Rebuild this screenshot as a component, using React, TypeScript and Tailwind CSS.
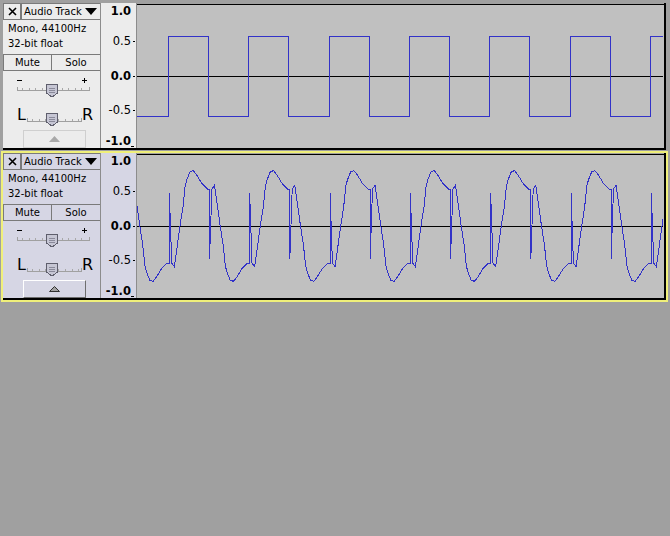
import React from "react";

const P = 80.33;

function squarePath(): string {
  let d = "M136 116.5";
  for (let k = 0; k < 7; k++) {
    const off = Math.round(P * k);
    const xr = 168 + off + 0.5;
    const xf = 208 + off + 0.5;
    d += ` H${xr} V36.5 H${xf} V116.5`;
  }
  return d;
}

const half: [number, number][] = [
  [0, 37], [0, -33], [1, -5], [2.4, 37], [5, 40.7], [7.4, 24], [10.7, 0],
  [13.7, -19.3], [15.7, -39.3], [17.4, -46], [20.7, -54.3], [24, -55.3],
  [27.4, -51], [32.4, -42.7], [38, -37],
];

function complexPoints(): string {
  const pts: string[] = [];
  for (let k = -1; k < 7; k++) {
    const base = 169.3 + k * P;
    for (const [t, dy] of half) pts.push(`${(base + t).toFixed(1)},${(226 + dy).toFixed(1)}`);
    const base2 = base + P / 2;
    for (const [t, dy] of half) pts.push(`${(base2 + t).toFixed(1)},${(226 - dy).toFixed(1)}`);
  }
  return pts.join(" ");
}

function Ruler({ y0 }: { y0: number }) {
  const labels: { t: string; y: number; b: boolean; tick: boolean }[] = [
    { t: "1.0", y: 15, b: true, tick: false },
    { t: "0.5", y: 45, b: false, tick: true },
    { t: "0.0", y: 80, b: true, tick: true },
    { t: "-0.5", y: 114, b: false, tick: true },
    { t: "-1.0", y: 145, b: true, tick: false },
  ];
  return (
    <svg width={35} height={142} viewBox={`101 ${y0} 35 142`} className="block" shapeRendering="crispEdges">
      {labels.map((l) => (
        <g key={l.t}>
          <text
            x={131}
            y={l.y + (y0 - 5)}
            textAnchor="end"
            fontFamily="DejaVu Sans, sans-serif"
            fontSize={11.5}
            fontWeight={l.b ? 700 : 400}
            fill="#000"
          >
            {l.t}
          </text>
          {l.tick && <line x1={133} x2={135} y1={l.y - 3.5 + (y0 - 5)} y2={l.y - 3.5 + (y0 - 5)} stroke="#000" />}
        </g>
      ))}
      <line x1={131} x2={134} y1={y0 + 141.5} y2={y0 + 141.5} stroke="#000" />
    </svg>
  );
}

function ThumbShape({ x, y }: { x: number; y: number }) {
  return (
    <g transform={`translate(${x} ${y})`}>
      <path d="M0.5 0.5 H11.5 V9 L6 13 L0.5 9 Z" fill="#c6c6d4" stroke="#5e5e6c" />
      <line x1={3} x2={9} y1={4.5} y2={4.5} stroke="#8a8a9a" />
      <line x1={3} x2={9} y1={6.5} y2={6.5} stroke="#8a8a9a" />
      <line x1={3} x2={9} y1={8.5} y2={8.5} stroke="#8a8a9a" />
    </g>
  );
}

function Ticks({ x0, x1, y }: { x0: number; x1: number; y: number }) {
  const ticks: number[] = [];
  for (let x = x0 + 5; x < x1 - 2; x += 6.6) ticks.push(Math.round(x));
  return (
    <g>
      <line x1={x0} x2={x1} y1={y + 0.5} y2={y + 0.5} stroke="#a0a0a0" />
      {ticks.map((x) => (
        <line key={x} x1={x + 0.5} x2={x + 0.5} y1={y - 2} y2={y} stroke="#a8a8a8" />
      ))}
      <line x1={x0 + 0.5} x2={x0 + 0.5} y1={y - 3} y2={y} stroke="#a0a0a0" />
      <line x1={x1 - 0.5} x2={x1 - 0.5} y1={y - 3} y2={y} stroke="#a0a0a0" />
    </g>
  );
}

function GainSlider() {
  return (
    <svg width={76} height={21} viewBox="0 0 76 21" className="block ml-[13px]" shapeRendering="crispEdges">
      <line x1={1} x2={6} y1={3.5} y2={3.5} stroke="#000" />
      <line x1={66} x2={71} y1={3.5} y2={3.5} stroke="#000" />
      <line x1={68.5} x2={68.5} y1={1} y2={6} stroke="#000" />
      <Ticks x0={1} x1={74} y={13} />
      <ThumbShape x={30} y={7} />
    </svg>
  );
}

function PanSlider() {
  return (
    <div className="flex items-start h-[21px] ml-[14px] font-['DejaVu_Sans',sans-serif] text-[16px] leading-none">
      <span className="w-[10px]">L</span>
      <svg width={55} height={21} viewBox="0 0 55 21" className="block" shapeRendering="crispEdges">
        <Ticks x0={0} x1={55} y={14} />
        <ThumbShape x={19} y={6} />
      </svg>
      <span>R</span>
    </div>
  );
}

function Panel({ selected }: { selected: boolean }) {
  const bg = selected ? "bg-[#d6d6e4]" : "bg-[#ececec]";
  return (
    <div className={`w-[98px] h-full ${bg} border-r border-[#8c8c8c] flex flex-col font-['DejaVu_Sans',sans-serif] text-[10px] leading-none text-black`}>
      <div className="flex h-[17px]">
        <div className="w-[18px] h-[17px] border border-[#7a7a7a] flex items-center justify-center">
          <svg width={9} height={9} viewBox="0 0 9 9">
            <path d="M1 1 L8 8 M8 1 L1 8" stroke="#000" strokeWidth={1.6} />
          </svg>
        </div>
        <div className="flex-1 h-[17px] border-y border-l border-[#7a7a7a] flex items-center pl-[2px] pr-[2px]">
          <span className="flex-1 whitespace-nowrap">Audio Track</span>
          <svg width={12} height={7} viewBox="0 0 12 7" className="mr-[1px]">
            <path d="M0 0 H12 L6 7 Z" fill="#000" />
          </svg>
        </div>
      </div>
      <div className="pl-[5px] pt-[4px] h-[16px] whitespace-nowrap">Mono, 44100Hz</div>
      <div className="pl-[5px] pt-[3px] h-[18px] whitespace-nowrap">32-bit float</div>
      <div className="flex h-[17px] border-b border-[#7a7a7a]">
        <div className="w-[49px] border border-[#7a7a7a] border-b-0 flex items-center justify-center">Mute</div>
        <div className="flex-1 border-t border-[#7a7a7a] flex items-center justify-center">Solo</div>
      </div>
      <div className="mt-[6px]">
        <GainSlider />
      </div>
      <div className="mt-[9px]">
        <PanSlider />
      </div>
      <div className="flex-1" />
      <div className="pl-[20px]">
        {selected ? (
          <div className="w-[63px] h-[18px] border border-t-white border-l-white border-b-[#6e6e6e] border-r-[#6e6e6e] flex items-center justify-center">
            <svg width={11} height={6} viewBox="0 0 11 6"><path d="M0.5 5.5 L5.5 0.5 L10.5 5.5 Z" fill="#a0a0a0" stroke="#303030" /></svg>
          </div>
        ) : (
          <div className="w-[63px] h-[18px] border border-[#cfcfcf] flex items-center justify-center">
            <svg width={11} height={6} viewBox="0 0 11 6"><path d="M0 6 L5.5 0 L11 6 Z" fill="#a8a8a8" /></svg>
          </div>
        )}
      </div>
    </div>
  );
}

function Track({ selected }: { selected: boolean }) {
  const y0 = selected ? 155 : 5;
  const rulerBg = selected ? "bg-[#d6d6e4]" : "bg-[#ececec]";
  return (
    <div className="w-[663px] h-[147px] flex border-r-2 border-b-2 border-black">
      <Panel selected={selected} />
      <div className={`w-[36px] ${rulerBg} border-r border-[#8c8c8c] pt-[2px]`}>
        <Ruler y0={y0} />
      </div>
      <div className="flex-1 mt-[1px] bg-[#c0c0c0] border-t border-black overflow-hidden">
        <svg width={526} height={143} viewBox={`137 ${y0} 526 143`} className="block" shapeRendering="crispEdges">
          <line x1={137} x2={663} y1={y0 + 71.5} y2={y0 + 71.5} stroke="#000" />
          {selected ? (
            <polyline points={complexPoints()} fill="none" stroke="#3232c8" strokeWidth={1} />
          ) : (
            <path d={squarePath()} fill="none" stroke="#3232c8" strokeWidth={1} />
          )}
        </svg>
      </div>
    </div>
  );
}

export default function App() {
  return (
    <div className="w-[670px] h-[536px] bg-[#a0a0a0] overflow-hidden">
      <div className="pl-[3px] pt-[3px] pb-[1px]">
        <Track selected={false} />
      </div>
      <div className="ml-[1px] w-[667px] border-2 border-[#f0f07a]">
        <Track selected={true} />
      </div>
    </div>
  );
}
